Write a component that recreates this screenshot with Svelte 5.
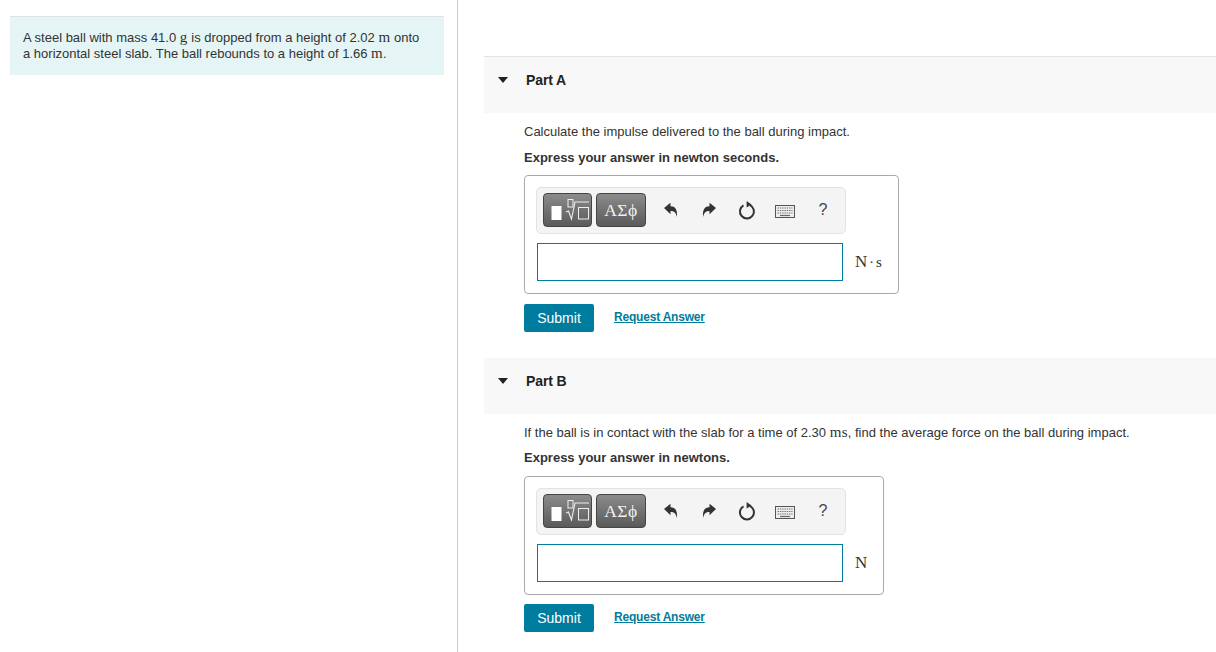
<script>
	const parts = [
		{
			name: 'Part A',
			unit: 'N·s',
			answerLabel: 'Express your answer in newton seconds.'
		},
		{
			name: 'Part B',
			unit: 'N',
			answerLabel: 'Express your answer in newtons.'
		}
	];
</script>

<main class="page">
	<aside class="left">
		<div class="problem">
			<span class="line">A steel ball with mass 41.0 <span class="m">g</span> is dropped from a height of 2.02 <span class="m">m</span> onto</span>
			<span class="line">a horizontal steel slab. The ball rebounds to a height of 1.66 <span class="m">m</span>.</span>
		</div>
	</aside>

	<section class="right">
		{#each parts as part, i}
			<div class="part" class:first={i === 0}>
				<header class="part-head">
					<span class="caret"></span>
					<h2>{part.name}</h2>
				</header>
				<div class="part-body">
					{#if i === 0}
						<p class="question">Calculate the impulse delivered to the ball during impact.</p>
					{:else}
						<p class="question">
							If the ball is in contact with the slab for a time of 2.30 <span class="m">ms</span>, find the average force on the ball during impact.
						</p>
					{/if}
					<p class="label">{part.answerLabel}</p>

					<div class="answer">
						<div class="toolbar">
							<button class="tool tool-math" aria-label="Templates">
								<svg width="46" height="30" viewBox="0 0 46 30">
									<rect x="6.500" y="11" width="10" height="14" fill="#fff" />
									<rect x="23" y="4.500" width="5" height="7.500" fill="none" stroke="#eee" />
									<path d="M21 17l2.500-1 3 8 3.500-17h14" fill="none" stroke="#eee" stroke-width="1.100" />
									<rect x="33.500" y="12.500" width="10" height="11.500" fill="none" stroke="#eee" />
								</svg>
							</button>
							<button class="tool tool-greek">ΑΣϕ</button>
							<span class="icon undo">
								<svg width="16" height="16" viewBox="0 0 16 16">
									<path d="M1 6L7.500.8v3.400c4.500 0 7.200 3 6.400 10.800-.9-4.400-2.600-6-6.400-6v3.300z" fill="#333" />
								</svg>
							</span>
							<span class="icon redo">
								<svg width="16" height="16" viewBox="0 0 16 16">
									<path d="M15 6L8.500.8v3.400c-4.500 0-7.200 3-6.400 10.800.9-4.400 2.600-6 6.400-6v3.300z" fill="#333" />
								</svg>
							</span>
							<span class="icon reset">
								<svg width="18" height="20" viewBox="0 0 18 20">
									<path d="M5.500 5.300a7 7 0 1 0 6.500-.2" fill="none" stroke="#333" stroke-width="2" />
									<path d="M8.600 1l5 3.600-5 3z" fill="#333" />
								</svg>
							</span>
							<span class="icon keys">
								<svg width="20" height="13" viewBox="0 0 20 13">
									<rect x="0.500" y="0.500" width="19" height="12" fill="#eee" stroke="#555" />
									<path d="M2.500 3h15M2.500 5.500h15M2.500 8h15" stroke="#777" stroke-width="1.200" stroke-dasharray="1.500 .8" />
									<path d="M5 10.500h10" stroke="#666" stroke-width="1.200" />
								</svg>
							</span>
							<span class="icon help">?</span>
						</div>
						<div class="input-row">
							<div class="input"></div>
							<span class="unit">
								{#if part.unit === 'N·s'}
									N<span class="dot">·</span><span class="small-s">s</span>
								{:else}
									{part.unit}
								{/if}
							</span>
						</div>
					</div>

					<div class="actions">
						<button class="submit">Submit</button>
						<a class="request" href="#request">Request Answer</a>
					</div>
				</div>
			</div>
		{/each}
	</section>
</main>

<style>
	:global(body) {
		background: #fff;
		overflow: hidden;
	}
	.page {
		display: flex;
		height: 652px;
		font-family: "Liberation Sans", Arial, sans-serif;
		font-size: 13px;
		color: #333;
	}
	.left {
		box-sizing: border-box;
		width: 458px;
		flex: none;
		padding: 16px 13px 0 10px;
		border-right: 1px solid #c7ccd1;
	}
	.problem {
		box-sizing: border-box;
		height: 59px;
		padding: 13px 13px 0;
		background: #e5f5f6;
		border-top: 1px solid #dde3e5;
		line-height: 16px;
	}
	.line {
		display: block;
		white-space: nowrap;
	}
	.m {
		font-family: "Liberation Serif", serif;
		font-size: 15px;
		letter-spacing: 0.3px;
		line-height: 1;
	}
	.right {
		flex: 1;
		padding: 56px 0 0 26px;
	}
	.part-head {
		box-sizing: border-box;
		height: 56px;
		display: flex;
		align-items: flex-start;
		padding: 15px 0 0 14px;
		background: #f8f8f8;
	}
	.first .part-head {
		height: 57px;
		border-top: 1px solid #e3e3e3;
	}
	.caret {
		width: 0;
		height: 0;
		margin: 5px 18px 0 0;
		border-left: 5.500px solid transparent;
		border-right: 5.500px solid transparent;
		border-top: 6px solid #222;
	}
	h2 {
		margin: 0;
		font-size: 14px;
		font-weight: 700;
		line-height: 16px;
		letter-spacing: -0.1px;
		color: #222;
	}
	.part-body {
		padding: 11px 0 26px 40px;
	}
	.question,
	.label {
		margin: 0;
		line-height: 16px;
	}
	.label {
		margin-top: 10px;
		font-weight: 700;
	}
	.part:not(.first) .label {
		margin-top: 9px;
	}
	.answer {
		display: inline-block;
		box-sizing: border-box;
		height: 119px;
		margin-top: 9px;
		padding: 11px 16px 0 11px;
		border: 1px solid #aaa;
		border-radius: 4px;
		vertical-align: top;
	}
	.part:not(.first) .answer {
		margin-top: 10px;
	}
	.toolbar {
		box-sizing: border-box;
		width: 310px;
		height: 47px;
		display: flex;
		align-items: center;
		padding: 0 0 1px 6px;
		background: #f4f4f4;
		border: 1px solid #e3e3e3;
		border-radius: 5px;
	}
	.tool {
		box-sizing: border-box;
		height: 34px;
		padding: 0;
		border: 1px solid #444;
		border-radius: 4px;
		background: linear-gradient(#8b8b8b, #5a5a5a);
		color: #f2f2f2;
		display: flex;
		align-items: center;
		justify-content: center;
	}
	.tool-math {
		width: 49px;
		margin-right: 4px;
	}
	.tool-greek {
		width: 50px;
		font-family: "Liberation Serif", serif;
		font-size: 17.500px;
		letter-spacing: 0.5px;
	}
	.icon {
		display: flex;
		align-items: center;
		justify-content: center;
		width: 20px;
		height: 20px;
	}
	.undo {
		margin-left: 15px;
	}
	.redo {
		margin-left: 18px;
	}
	.reset {
		margin-left: 18px;
	}
	.keys {
		margin-left: 18px;
		padding-top: 2px;
	}
	.help {
		margin-left: 18px;
		font-size: 16px;
		color: #444;
	}
	.input-row {
		display: flex;
		align-items: center;
		margin-top: 9px;
		padding-left: 1px;
	}
	.input {
		box-sizing: border-box;
		width: 306px;
		height: 38px;
		border: 1px solid #007c9e;
		background: #fff;
	}
	.unit {
		margin-left: 12px;
		font-family: "Liberation Serif", serif;
		font-size: 17px;
		color: #333;
		white-space: nowrap;
	}
	.dot {
		margin: 0 2px;
		font-size: 14px;
	}
	.small-s {
		font-size: 15px;
	}
	.actions {
		display: flex;
		align-items: center;
		margin-top: 10px;
	}
	.part:not(.first) .actions {
		margin-top: 9px;
	}
	.submit {
		width: 70px;
		height: 28px;
		padding: 0;
		border: none;
		border-radius: 2px;
		background: #007c9e;
		color: #fff;
		font-family: inherit;
		font-size: 14px;
	}
	.request {
		margin-left: 20px;
		font-size: 12px;
		font-weight: 700;
		letter-spacing: -0.2px;
		color: #007c9e;
		text-decoration: underline;
		position: relative;
		top: -1px;
	}
</style>
